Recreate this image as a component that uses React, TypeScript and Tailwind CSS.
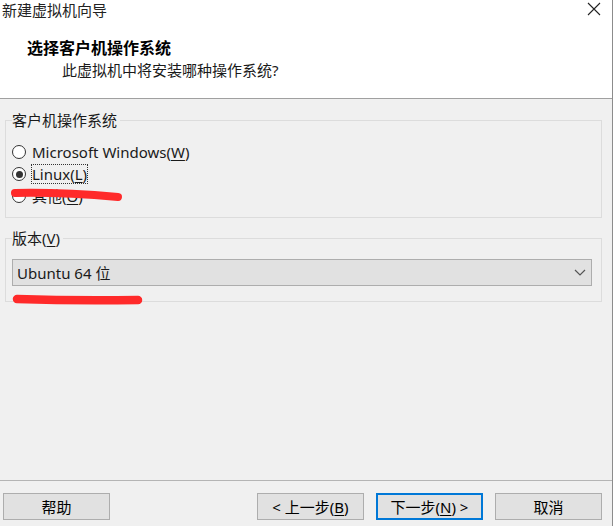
import React from "react";

function Radio({ checked }: { checked?: boolean }) {
  return (
    <span className="flex h-[14px] w-[14px] shrink-0 items-center justify-center rounded-full border border-[#333333] bg-white">
      {checked ? <span className="h-[7px] w-[7px] rounded-full bg-[#333333]" /> : null}
    </span>
  );
}

export default function App() {
  return (
    <div className="relative h-[526px] w-[614px] bg-white font-['Noto_Sans','Noto_Sans_CJK_SC',sans-serif] text-[15px] text-[#1a1a1a]">
      <div className="flex h-full w-[613px] flex-col border-r border-[#8c8c8c] bg-[#f0f0f0]">
        {/* header */}
        <div className="h-[99px] border-b border-[#a0a0a0] bg-white">
          <div className="flex h-[20px] items-center justify-between pr-[11px]">
            <span className="pl-[2px] leading-[20px] text-[#222222]">新建虚拟机向导</span>
            <svg width="14" height="14" viewBox="0 0 14 14" className="mt-[-2px]">
              <path d="M1 1 L13 13 M13 1 L1 13" stroke="#222222" strokeWidth="1.1" fill="none" />
            </svg>
          </div>
          <div className="mt-[18px] pl-[27px] text-[16px] font-bold leading-[20px] text-black">选择客户机操作系统</div>
          <div className="mt-[2px] pl-[62px] leading-[20px] text-[#1a1a1a]">此虚拟机中将安装哪种操作系统?</div>
        </div>

        {/* body */}
        <fieldset className="ml-[5px] mt-[13px] w-[597px] border border-[#dcdcdc] pb-[10px] pl-[6px]">
          <legend className="pr-[3px] leading-[16px]">客户机操作系统</legend>
          <div className="mt-[13px] flex flex-col">
            <label className="flex h-[22px] items-center">
              <Radio />
              <span className="ml-[5px] border border-dotted border-transparent leading-[18px]">
                Microsoft Windows(<span className="underline underline-offset-2">W</span>)
              </span>
            </label>
            <label className="flex h-[22px] items-center">
              <Radio checked />
              <span className="ml-[5px] border border-dotted border-[#333333] leading-[18px]">
                Linux(<span className="underline underline-offset-2">L</span>)
              </span>
            </label>
            <label className="flex h-[22px] items-center">
              <Radio />
              <span className="ml-[5px] border border-dotted border-transparent leading-[18px]">
                其他(<span className="underline underline-offset-2">O</span>)
              </span>
            </label>
          </div>
        </fieldset>

        <fieldset className="ml-[5px] mt-[12px] w-[597px] border border-[#dcdcdc] pb-[15px] pl-[6px]">
          <legend className="pr-[3px] leading-[16px]">
            版本(<span className="underline underline-offset-2">V</span>)
          </legend>
          <div className="mt-[13px] flex h-[27px] w-[580px] items-center justify-between border border-[#adadad] bg-[#e1e1e1] pl-[4px] pr-[5px]">
            <span className="leading-[20px]">Ubuntu 64 位</span>
            <svg width="12" height="7" viewBox="0 0 12 7">
              <path d="M1 1 L6 6 L11 1" stroke="#555555" strokeWidth="1.2" fill="none" />
            </svg>
          </div>
        </fieldset>

        {/* footer */}
        <div className="mt-auto flex border-t border-[#b4b4b4] pb-[6px] pr-[10px] pt-[12px]">
          <button className="ml-[3px] h-[27px] w-[107px] border border-[#adadad] bg-[#e1e1e1] leading-[20px] text-black">帮助</button>
          <button className="ml-auto h-[27px] w-[107px] border border-[#adadad] bg-[#e1e1e1] leading-[20px] text-black">
            &lt; 上一步(<span className="underline underline-offset-2">B</span>)
          </button>
          <button className="ml-[12px] h-[27px] w-[107px] border-2 border-[#0078d7] bg-[#e1e1e1] leading-[20px] text-black">
            下一步(<span className="underline underline-offset-2">N</span>) &gt;
          </button>
          <button className="ml-[12px] h-[27px] w-[107px] border border-[#adadad] bg-[#e1e1e1] leading-[20px] text-black">取消</button>
        </div>
      </div>

      {/* red annotation strokes */}
      <svg className="pointer-events-none absolute left-0 top-0" width="614" height="526" viewBox="0 0 614 526">
        <path d="M15 193 Q60 192 118 197" stroke="#ff2a2a" strokeWidth="8" strokeLinecap="round" fill="none" />
        <path d="M17 299 Q75 301 138 300" stroke="#ff2a2a" strokeWidth="8.5" strokeLinecap="round" fill="none" />
      </svg>
    </div>
  );
}
